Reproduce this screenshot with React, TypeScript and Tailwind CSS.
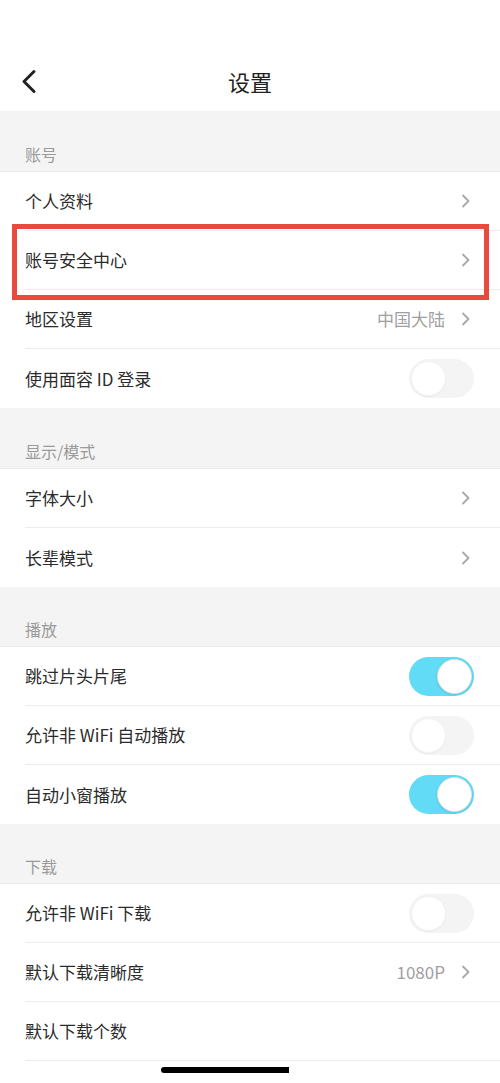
import React from 'react'

type Row = {
  label: string
  value?: string
  arrow?: boolean
  toggle?: 'on' | 'off'
}

type Section = {
  title: string
  rows: Row[]
}

const sections: Section[] = [
  {
    title: '账号',
    rows: [
      { label: '个人资料', arrow: true },
      { label: '账号安全中心', arrow: true },
      { label: '地区设置', value: '中国大陆', arrow: true },
      { label: '使用面容 ID 登录', toggle: 'off' },
    ],
  },
  {
    title: '显示/模式',
    rows: [
      { label: '字体大小', arrow: true },
      { label: '长辈模式', arrow: true },
    ],
  },
  {
    title: '播放',
    rows: [
      { label: '跳过片头片尾', toggle: 'on' },
      { label: '允许非 WiFi 自动播放', toggle: 'off' },
      { label: '自动小窗播放', toggle: 'on' },
    ],
  },
  {
    title: '下载',
    rows: [
      { label: '允许非 WiFi 下载', toggle: 'off' },
      { label: '默认下载清晰度', value: '1080P', arrow: true },
      { label: '默认下载个数' },
      { label: '下载存储位置' },
    ],
  },
]

const Chevron = () => (
  <svg width="10" height="16" viewBox="0 0 10 16" className="ml-[16px]">
    <path d="M2 2.5 L7.5 8 L2 13.5" fill="none" stroke="#a8a8a8" strokeWidth="1.8" strokeLinecap="round" strokeLinejoin="round" />
  </svg>
)

const Toggle = ({ on }: { on: boolean }) => (
  <div
    className={
      on
        ? 'flex h-[39px] w-[65px] items-center justify-end rounded-full bg-[#62dcf6] px-[2px]'
        : 'flex h-[39px] w-[65px] items-center justify-start rounded-full bg-[#f4f4f4] px-[2px]'
    }
  >
    <div
      className={
        on
          ? 'h-[35px] w-[35px] rounded-full border border-[#e2e2e2] bg-white shadow-[0_1px_3px_rgba(0,0,0,0.12)]'
          : 'h-[35px] w-[35px] rounded-full border border-[#f2f2f2] bg-white shadow-[0_1px_2px_rgba(0,0,0,0.04)]'
      }
    />
  </div>
)

const SettingRow = ({ row, last }: { row: Row; last: boolean }) => (
  <div className="pl-[25px]">
    <div
      className={
        last
          ? 'flex h-[59px] items-center pr-[26px]'
          : 'flex h-[59px] items-center border-b border-[#ececec] pr-[26px]'
      }
    >
      <span className="flex-1 text-[17px] text-[#2b2b2b]">{row.label}</span>
      {row.value && <span className="text-[17px] text-[#a0a0a0]">{row.value}</span>}
      {row.arrow && (
        <span className="pr-[3px]">
          <Chevron />
        </span>
      )}
      {row.toggle && <Toggle on={row.toggle === 'on'} />}
    </div>
  </div>
)

export default function App() {
  return (
    <div
      className="relative h-[1083px] w-[500px] overflow-hidden bg-white"
      style={{ fontFamily: '"Noto Sans CJK SC", "Noto Sans", sans-serif' }}
    >
      {/* header */}
      <div className="relative flex h-[111px] items-center justify-center pt-[52px]">
        <svg width="18" height="26" viewBox="0 0 18 26" className="absolute left-[20px] top-[69px]">
          <path d="M14 2.5 L4 12.5 L14 22.5" fill="none" stroke="#222" strokeWidth="3" strokeLinecap="round" strokeLinejoin="round" />
        </svg>
        <span className="text-[22px] text-[#222]">设置</span>
      </div>

      {sections.map((s, i) => (
        <div key={s.title}>
          <div
            className={
              i < 2
                ? 'flex h-[61px] items-end border-b border-[#ececec] bg-[#f4f4f4] px-[25px] pb-[5px]'
                : 'flex h-[60px] items-end border-b border-[#ececec] bg-[#f4f4f4] px-[25px] pb-[5px]'
            }
          >
            <span className="text-[16px] text-[#9a9a9a]">{s.title}</span>
          </div>
          <div className="bg-white">
            {s.rows.map((r, j) => (
              <SettingRow key={r.label} row={r} last={j === s.rows.length - 1} />
            ))}
          </div>
        </div>
      ))}

      {/* highlight annotation */}
      <div className="absolute left-[12px] top-[224px] h-[76px] w-[477px] border-[5px] border-[#ea4a3d]" />

      {/* home indicator */}
      <div className="absolute left-[161px] top-[1067px] h-[6px] w-[128px] rounded-l-full bg-black" />
    </div>
  )
}
